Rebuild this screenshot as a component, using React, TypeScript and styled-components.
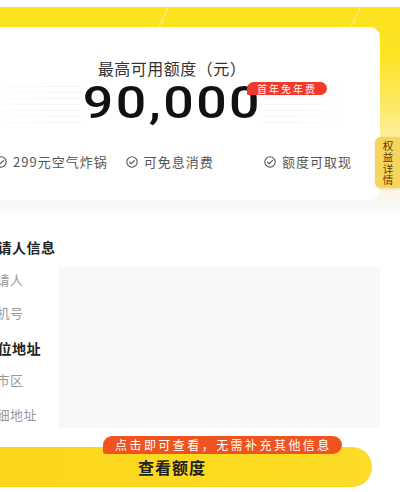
import React from 'react'
import styled, { createGlobalStyle } from 'styled-components'

const GlobalStyle = createGlobalStyle`
  html, body {
    margin: 0;
    padding: 0;
    background: #ffffff;
  }
  body {
    font-family: 'Noto Sans CJK SC', 'Noto Sans', sans-serif;
    color: #222222;
  }
  * {
    box-sizing: border-box;
  }
`

const Page = styled.div`
  position: relative;
  width: 400px;
  height: 492px;
  overflow: hidden;
  background: #ffffff;
`

// the scroll view is shifted so its left edge sits off screen
const Shell = styled.div`
  width: 436px;
  margin-left: -36px;
  padding-top: 7px;
`

const Hero = styled.section`
  padding: 20px 20px 15px 0;
  background:
    linear-gradient(115deg, transparent 0 38%, rgba(255, 255, 255, 0.35) 38.3%, transparent 38.8%),
    linear-gradient(115deg, transparent 0 74%, rgba(255, 255, 255, 0.3) 74.3%, transparent 74.8%),
    linear-gradient(180deg, #fce21d 0, #fce425 50px, #fde96a 100px, #fdf1b4 145px, #fdf7e2 182px, #f7f7f7 196px, #ffffff 215px);
`

const Card = styled.div`
  height: 173px;
  background: #ffffff;
  border-radius: 10px;
  padding-top: 30px;
  display: flex;
  flex-direction: column;
  align-items: center;
`

const Title = styled.div`
  font-size: 16px;
  line-height: 22px;
  color: #333333;
  letter-spacing: 0.5px;
`

const AmountRow = styled.div`
  position: relative;
  align-self: stretch;
  display: flex;
  justify-content: center;
  height: 44px;
  margin-top: 2px;

  /* faint ruled lines either side of the figure */
  &::before {
    content: '';
    position: absolute;
    inset: 0;
    background: repeating-linear-gradient(180deg, transparent 0 5px, rgba(0, 0, 0, 0.035) 5px 6px);
    -webkit-mask-image: linear-gradient(90deg, transparent 0, #000 20%, #000 80%, transparent 92%);
    mask-image: linear-gradient(90deg, transparent 0, #000 20%, #000 80%, transparent 92%);
  }
`

const AmountWrap = styled.div`
  position: relative;
  width: 182px;
  background: #ffffff;
  display: flex;
  justify-content: center;
`

const Amount = styled.div`
  font-family: Roboto, 'Noto Sans', sans-serif;
  font-size: 44px;
  font-weight: 500;
  line-height: 44px;
  letter-spacing: 2px;
  color: #111111;
  transform: scaleX(1.22);
  transform-origin: center;
`

const Badge = styled.span`
  position: absolute;
  left: 166px;
  top: 1px;
  height: 13px;
  padding: 0 10px 0 10px;
  border-radius: 7px 7px 7px 2px;
  background: #ef3b2d;
  color: #ffffff;
  font-size: 10px;
  line-height: 13px;
  letter-spacing: 2px;
  white-space: nowrap;
`

const Features = styled.ul`
  list-style: none;
  margin: 28px 0 0;
  padding: 0 28px 0 31px;
  align-self: stretch;
  display: flex;
  gap: 18px;
`

const Feature = styled.li<{ $push?: boolean }>`
  display: flex;
  align-items: center;
  gap: 6px;
  font-size: 13px;
  line-height: 18px;
  letter-spacing: 1px;
  color: #555555;
  margin-left: ${p => (p.$push ? 'auto' : '0')};
`

const CheckIcon = () => (
  <svg width="12" height="12" viewBox="0 0 12 12" fill="none">
    <circle cx="6" cy="6" r="5.2" stroke="#555" strokeWidth="1.1" />
    <path d="M3.6 6.1 L5.3 7.7 L8.4 4.6" stroke="#555" strokeWidth="1.2" strokeLinecap="round" strokeLinejoin="round" />
  </svg>
)

const SideTab = styled.div`
  position: absolute;
  right: 0;
  top: 137px;
  width: 25px;
  height: 51px;
  border-radius: 6px 0 0 6px;
  background: #f7d45c;
  box-shadow: 0 1px 3px rgba(180, 140, 0, 0.25);
  display: flex;
  align-items: center;
  justify-content: center;
  padding-left: 1px;
`

// one character per line, stacked top to bottom
const TabLabel = styled.span`
  display: block;
  width: 11px;
  font-size: 10.5px;
  line-height: 11.5px;
  text-align: center;
  word-break: break-all;
  color: #5a3a00;
`

const Form = styled.section`
  padding: 22px 20px 0 19px;
`

const SectionTitle = styled.div`
  font-size: 14px;
  line-height: 20px;
  font-weight: 700;
  color: #222222;
  letter-spacing: 0.5px;
`

const Fields = styled.div`
  display: flex;
  align-items: flex-start;
  margin-top: 10px;
`

const Labels = styled.div`
  width: 75px;
  display: flex;
  flex-direction: column;
`

const Label = styled.div<{ $head?: boolean; $gap: number }>`
  height: 26px;
  margin-top: ${p => p.$gap}px;
  font-size: ${p => (p.$head ? '14px' : '13px')};
  font-weight: ${p => (p.$head ? 700 : 400)};
  color: ${p => (p.$head ? '#222222' : '#9a9a9a')};
  line-height: 26px;
  letter-spacing: 0.5px;
  white-space: nowrap;
`

const InputPanel = styled.div`
  flex: 1;
  height: 161px;
  background: #f8f8f8;
  border-radius: 2px;
`

const Footer = styled.div`
  position: relative;
  margin: 19px 0 0 8px;
  width: 400px;
`

const Tip = styled.div`
  position: absolute;
  left: 131px;
  top: -11px;
  height: 18px;
  padding: 0 10px 0 12px;
  border-radius: 9px 9px 9px 3px;
  background: #ef5420;
  color: #ffffff;
  font-size: 12px;
  line-height: 18px;
  letter-spacing: 2.45px;
  white-space: nowrap;
`

const SubmitButton = styled.button`
  display: block;
  width: 100%;
  height: 40px;
  border: none;
  border-radius: 20px;
  background: linear-gradient(90deg, #fcd51c 0, #fcdb20 70%, #fddb2a 100%);
  font-family: 'Noto Sans CJK SC', sans-serif;
  font-size: 16px;
  font-weight: 700;
  letter-spacing: 1px;
  line-height: 38px;
  color: #222222;
  padding: 0;
`

const features = ['299元空气炸锅', '可免息消费', '额度可取现']

const labels = [
  { text: '申请人', gap: 0 },
  { text: '手机号', gap: 7 },
  { text: '单位地址', gap: 9, head: true },
  { text: '省市区', gap: 6 },
  { text: '详细地址', gap: 9 }
]

export default function App() {
  return (
    <>
      <GlobalStyle />
      <Page>
        <Shell>
          <Hero>
            <Card>
              <Title>最高可用额度（元）</Title>
              <AmountRow>
                <AmountWrap>
                  <Amount>90,000</Amount>
                  <Badge>首年免年费</Badge>
                </AmountWrap>
              </AmountRow>
              <Features>
                {features.map((f, i) => (
                  <Feature key={f} $push={i === 2}>
                    <CheckIcon />
                    {f}
                  </Feature>
                ))}
              </Features>
            </Card>
          </Hero>
          <Form>
            <SectionTitle>申请人信息</SectionTitle>
            <Fields>
              <Labels>
                {labels.map(l => (
                  <Label key={l.text} $gap={l.gap} $head={l.head}>
                    {l.text}
                  </Label>
                ))}
              </Labels>
              <InputPanel />
            </Fields>
          </Form>
          <Footer>
            <SubmitButton>查看额度</SubmitButton>
            <Tip>点击即可查看，无需补充其他信息</Tip>
          </Footer>
        </Shell>
        <SideTab>
          <TabLabel>权益详情</TabLabel>
        </SideTab>
      </Page>
    </>
  )
}
